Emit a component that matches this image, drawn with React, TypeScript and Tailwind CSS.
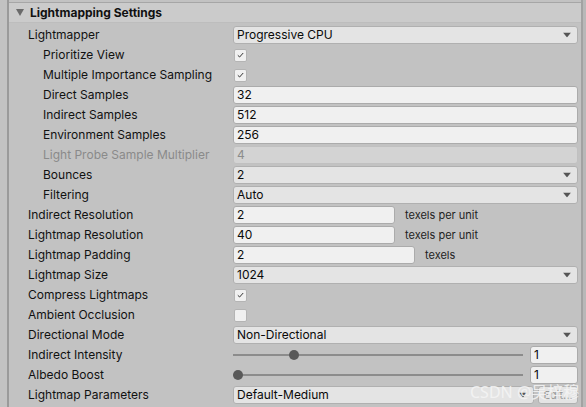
import React from 'react';

const font = { fontFamily: 'Inter, "Noto Sans CJK SC", sans-serif' };

function Arrow() {
  return (
    <svg width="8" height="5" viewBox="0 0 8 5" className="absolute right-[6px] top-1/2 -translate-y-1/2">
      <path d="M0 0h8L4 5z" fill="#555" />
    </svg>
  );
}

function Dropdown({ value, className = '' }: { value: string; className?: string }) {
  return (
    <div className={`relative h-[18px] rounded-[3px] bg-[#e4e4e4] border border-[#b0b0b0] pl-[3px] text-[12px] leading-[16px] text-[#0a0a0a] ${className}`}>
      {value}
      <Arrow />
    </div>
  );
}

function Field({ value, className = '', disabled = false }: { value: string; className?: string; disabled?: boolean }) {
  return (
    <div
      className={`h-[18px] rounded-[3px] border pl-[3px] text-[12px] leading-[16px] ${
        disabled ? 'bg-[#d3d3d3] border-[#c0c0c0] text-[#8c8c8c]' : 'bg-[#f0f0f0] border-[#ababab] text-[#0a0a0a]'
      } ${className}`}
    >
      {value}
    </div>
  );
}

function Check({ on }: { on: boolean }) {
  return (
    <div className="ml-[1px] w-[13px] h-[13px] rounded-[2px] bg-[#f0f0f0] border border-[#b4b4b4] flex items-center justify-center">
      {on && (
        <svg width="9" height="8" viewBox="0 0 9 8">
          <path d="M1.8 4.3 3.6 6 7.2 2" stroke="#333" strokeWidth="1" fill="none" />
        </svg>
      )}
    </div>
  );
}

function Slider({ pos }: { pos: number }) {
  return (
    <div className="flex items-center gap-[7px]">
      <div className="relative flex-1 h-[18px] flex items-center">
        <div className="w-full h-[2px] bg-[#8c8c8c]" />
        <div className="absolute top-1/2 w-[10px] h-[10px] -translate-y-1/2 rounded-full bg-[#595959]" style={{ left: pos }} />
      </div>
      <Field value="1" className="w-[48px]" />
    </div>
  );
}

function Row({ label, nested = false, disabled = false, children }: { label: string; nested?: boolean; disabled?: boolean; children: React.ReactNode }) {
  return (
    <div className="flex items-center h-[20px]">
      <div
        className={`w-[224px] shrink-0 text-[12px] ${nested ? 'pl-[34px]' : 'pl-[19px]'} ${disabled ? 'text-[#8a8a8a]' : 'text-[#111]'}`}
      >
        {label}
      </div>
      <div className="flex-1 pr-[3px]">{children}</div>
    </div>
  );
}

export default function App() {
  return (
    <div className="relative w-[586px] h-[407px] overflow-hidden bg-[#c2c2c2] flex" style={font}>
      <div className="w-[7px] shrink-0" />
      <div className="w-[2px] shrink-0 bg-[#9a9a9a]" />
      <div className="flex-1 flex flex-col">
        <div className="h-[2px] bg-[#c2c2c2]" />
        <div className="h-[21px] bg-[#cbcbcb] border-t border-[#a6a6a6] border-b border-b-[#bdbdbd] flex items-center">
          <svg width="8" height="7" viewBox="0 0 8 7" className="ml-[7px]">
            <path d="M0 0h8L4 7z" fill="#6a6a6a" />
          </svg>
          <span className="ml-[6px] text-[12px] font-bold text-[#111]">Lightmapping Settings</span>
        </div>
        <div className="h-[2px]" />
        <Row label="Lightmapper"><Dropdown value="Progressive CPU" /></Row>
        <Row label="Prioritize View" nested><Check on /></Row>
        <Row label="Multiple Importance Sampling" nested><Check on /></Row>
        <Row label="Direct Samples" nested><Field value="32" /></Row>
        <Row label="Indirect Samples" nested><Field value="512" /></Row>
        <Row label="Environment Samples" nested><Field value="256" /></Row>
        <Row label="Light Probe Sample Multiplier" nested disabled><Field value="4" disabled /></Row>
        <Row label="Bounces" nested><Dropdown value="2" /></Row>
        <Row label="Filtering" nested><Dropdown value="Auto" /></Row>
        <Row label="Indirect Resolution">
          <div className="flex items-center">
            <Field value="2" className="w-[162px]" />
            <span className="ml-[10px] text-[11px] text-[#222]">texels per unit</span>
          </div>
        </Row>
        <Row label="Lightmap Resolution">
          <div className="flex items-center">
            <Field value="40" className="w-[162px]" />
            <span className="ml-[10px] text-[11px] text-[#222]">texels per unit</span>
          </div>
        </Row>
        <Row label="Lightmap Padding">
          <div className="flex items-center">
            <Field value="2" className="w-[182px]" />
            <span className="ml-[10px] text-[11px] text-[#222]">texels</span>
          </div>
        </Row>
        <Row label="Lightmap Size"><Dropdown value="1024" /></Row>
        <Row label="Compress Lightmaps"><Check on /></Row>
        <Row label="Ambient Occlusion"><Check on={false} /></Row>
        <Row label="Directional Mode"><Dropdown value="Non-Directional" /></Row>
        <Row label="Indirect Intensity"><Slider pos={56} /></Row>
        <Row label="Albedo Boost"><Slider pos={0} /></Row>
        <Row label="Lightmap Parameters">
          <div className="flex items-center gap-[4px]">
            <Dropdown value="Default-Medium" className="flex-1" />
            <div className="w-[40px] h-[18px] rounded-[3px] bg-[#e4e4e4] border border-[#b0b0b0] text-[11px] leading-[16px] text-center text-[#9a9a9a]">
              Edit...
            </div>
          </div>
        </Row>
      </div>
      <div className="w-[2px] shrink-0 bg-[#a2a2a2]" />
      <div className="w-[3px] shrink-0 bg-[#b8b8b8]" />
      <div className="absolute left-[470px] top-[380px] text-[16px] text-[#f4f4f4]/90" style={{ fontFamily: '"Noto Sans", "Noto Sans CJK SC", sans-serif' }}>
        CSDN @吴梓穆
      </div>
    </div>
  );
}
